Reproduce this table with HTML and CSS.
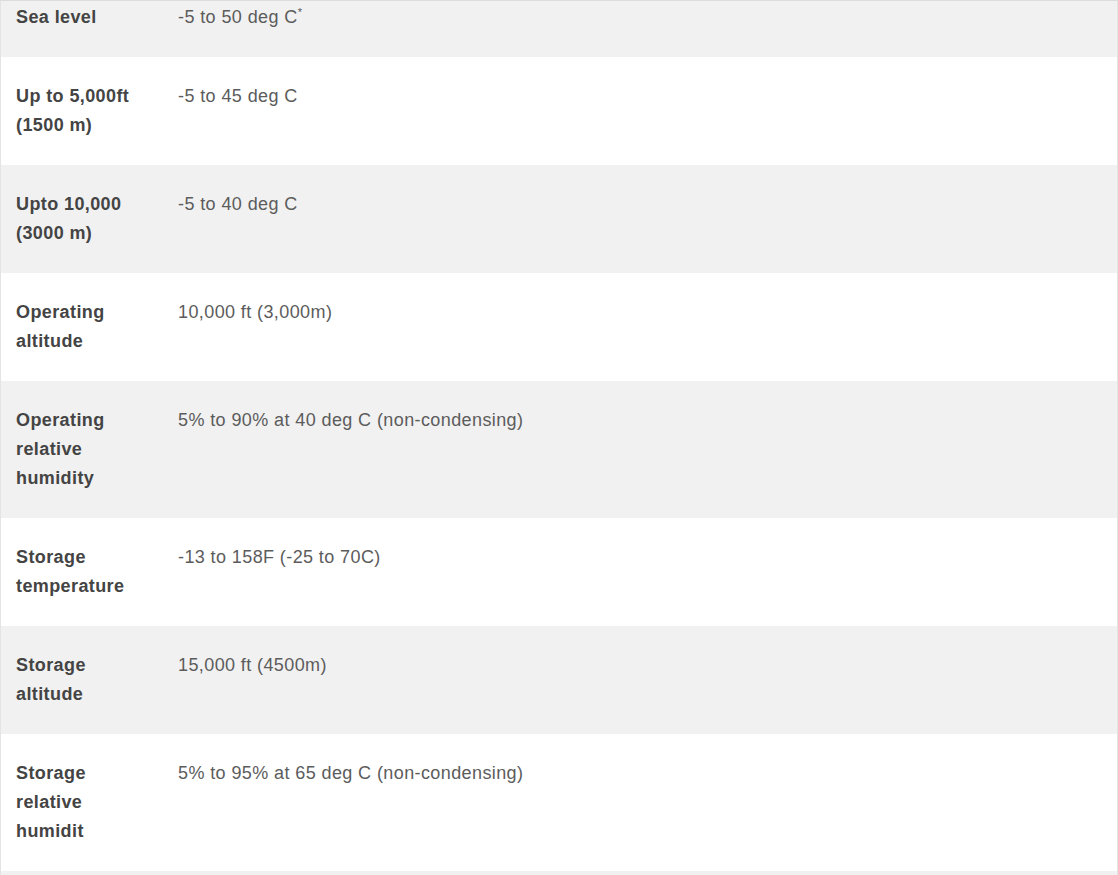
FILE: index.html
```html
<!DOCTYPE html>
<html lang="en">
<head>
    <meta charset="UTF-8">
    <title>Environmental Specifications</title>
    <link rel="stylesheet" href="styles.css">
</head>
<body>
    <div class="spec-wrap">
        <table class="spec-table">
            <tbody>
                <tr>
                    <th>Sea level</th>
                    <td>-5 to 50 deg C<sup>*</sup></td>
                </tr>
                <tr>
                    <th>Up to 5,000ft (1500 m)</th>
                    <td>-5 to 45 deg C</td>
                </tr>
                <tr>
                    <th>Upto 10,000 (3000 m)</th>
                    <td>-5 to 40 deg C</td>
                </tr>
                <tr>
                    <th>Operating altitude</th>
                    <td>10,000 ft (3,000m)</td>
                </tr>
                <tr>
                    <th>Operating relative humidity</th>
                    <td>5% to 90% at 40 deg C (non-condensing)</td>
                </tr>
                <tr>
                    <th>Storage temperature</th>
                    <td>-13 to 158F (-25 to 70C)</td>
                </tr>
                <tr>
                    <th>Storage altitude</th>
                    <td>15,000 ft (4500m)</td>
                </tr>
                <tr>
                    <th>Storage relative humidit</th>
                    <td>5% to 95% at 65 deg C (non-condensing)</td>
                </tr>
                <tr class="cut">
                    <th></th>
                    <td></td>
                </tr>
            </tbody>
        </table>
    </div>
</body>
</html>
```

FILE: styles.css
```css
body {
    margin: 0;
    padding: 0;
    background-color: #fff;
    font-family: "Liberation Sans", Arial, sans-serif;
}
.spec-wrap {
    width: 1116px;
    border-top: 1px solid #dcdcdc;
    border-left: 1px solid #e4e4e4;
    border-right: 1px solid #e4e4e4;
    height: 874px;
    overflow: hidden;
}
.spec-table {
    width: 100%;
    border-collapse: collapse;
    font-size: 18px;
    line-height: 29px;
    letter-spacing: 0.4px;
}
.spec-table tr:nth-child(odd) {
    background-color: #f1f1f1;
}
.spec-table th,
.spec-table td {
    padding: 25px 15px;
    vertical-align: top;
    text-align: left;
}
.spec-table th {
    width: 132px;
    color: #444;
    font-weight: bold;
}
.spec-table td {
    color: #5c5c5c;
    font-weight: normal;
}
.spec-table tr:first-child th,
.spec-table tr:first-child td {
    padding-top: 2px;
}
.spec-table sup {
    font-size: 11px;
    line-height: 0;
    vertical-align: 7px;
}
```
